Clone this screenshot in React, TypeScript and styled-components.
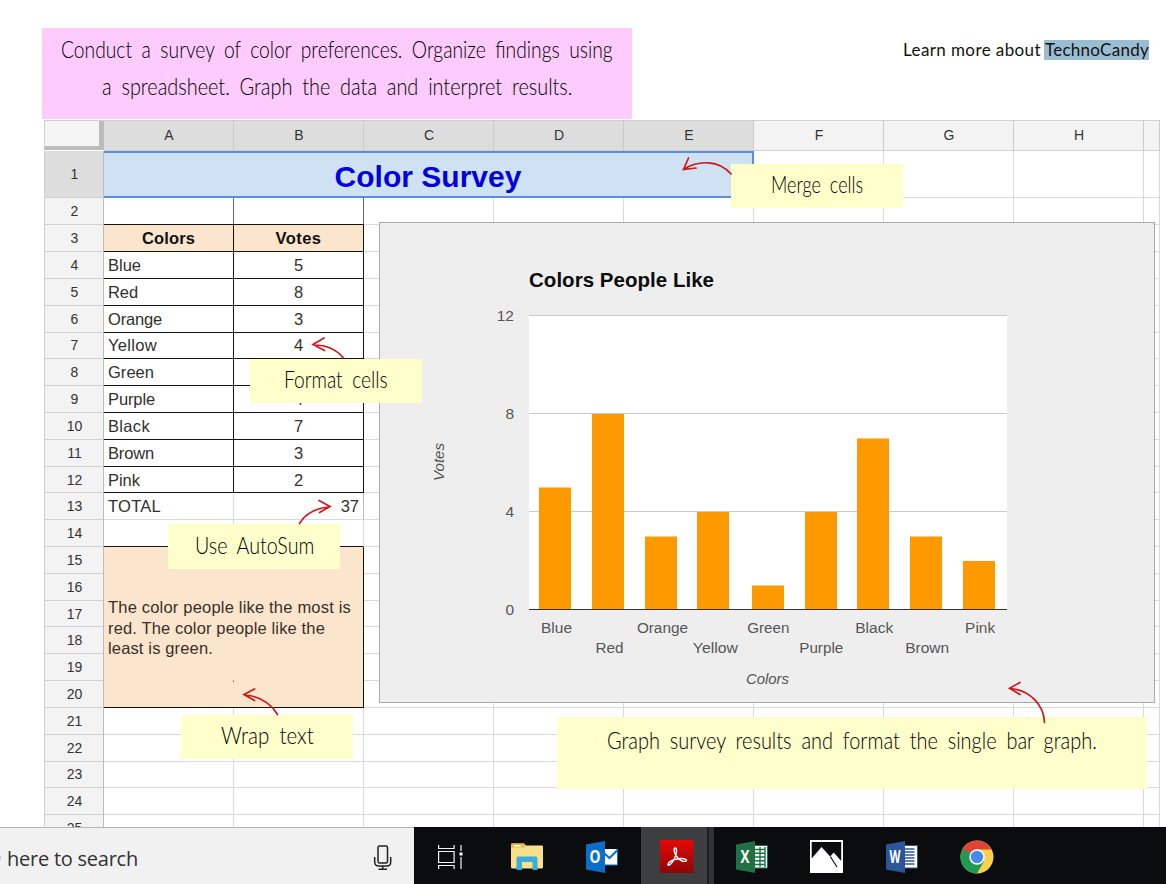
import React, { useLayoutEffect, useRef, useState } from "react";
import styled, { createGlobalStyle, css } from "styled-components";

const GlobalStyle = createGlobalStyle`
  * { box-sizing: border-box; }
  body { margin: 0; background: #fff; overflow: hidden; }
`;

const SANS = `"Liberation Sans", Arial, sans-serif`;

/* ---------- text that is tracked out to a given width ---------- */

const Tracked = styled.span`
  display: inline-block;
  white-space: nowrap;
`;

function Fit({ w, children }: { w: number; children: string }) {
  const ref = useRef<HTMLSpanElement>(null);
  const [spacing, setSpacing] = useState(0);
  useLayoutEffect(() => {
    if (ref.current) {
      setSpacing((w - ref.current.getBoundingClientRect().width) / children.length);
    }
  }, [w, children]);
  return (
    <Tracked ref={ref} style={{ letterSpacing: spacing }}>
      {children}
    </Tracked>
  );
}

/* ---------- handwritten line, condensed to a given width ---------- */

const InkLine = styled.span<{ $w: number }>`
  display: inline-block;
  width: ${(p) => p.$w}px;
  text-align: left;
  white-space: nowrap;
`;

const InkStroke = styled.span`
  display: inline-block;
  transform-origin: 0 50%;
`;

function Ink({ w, children }: { w: number; children: string }) {
  const ref = useRef<HTMLSpanElement>(null);
  const [scale, setScale] = useState(1);
  useLayoutEffect(() => {
    if (ref.current) setScale(w / ref.current.offsetWidth);
  }, [w, children]);
  return (
    <InkLine $w={w}>
      <InkStroke ref={ref} style={{ transform: `scaleX(${scale})` }}>
        {children}
      </InkStroke>
    </InkLine>
  );
}

/* ---------- page ---------- */

const Page = styled.div`
  position: relative;
  display: flex;
  flex-direction: column;
  width: 1166px;
  height: 884px;
  overflow: hidden;
  background: #fff;
  font-family: ${SANS};
`;

const Intro = styled.header`
  display: flex;
  justify-content: space-between;
  align-items: flex-start;
  flex: none;
  height: 120px;
  padding: 28px 17px 0 42px;
`;

const handwriting = css`
  font-family: "Lato", sans-serif;
  font-weight: 300;
  font-size: 22.5px;
  word-spacing: 5px;
  color: #000;
`;

const Assignment = styled.div`
  ${handwriting}
  display: flex;
  flex-direction: column;
  align-items: center;
  width: 590px;
  height: 91px;
  padding: 3px 0 0;
  line-height: 37px;
  background: #fdcbfd;
`;

const LearnMore = styled.div`
  display: flex;
  margin-top: 12px;
  font-family: "Lato", sans-serif;
  font-size: 17px;
  line-height: 19px;
  color: #111;
`;

const Highlighted = styled.span`
  height: 20px;
  margin-left: 3px;
  padding-left: 1px;
  background: #9bbdd3;
`;

/* ---------- spreadsheet ---------- */

const SheetFrame = styled.main`
  flex: 1;
  min-height: 0;
  overflow: hidden;
  padding-left: 44px;
`;

const Grid = styled.div`
  display: grid;
  width: 1116px;
  grid-template-columns: 60px repeat(8, 130px) 16px;
  grid-template-rows: 30px 47.3px 27px repeat(23, 26.82px);
  border-top: 1px solid #cfcfcf;
`;

const Corner = styled.div`
  grid-area: 1 / 1;
  margin-bottom: 1px;
  background: #f5f5f5;
  border-left: 1px solid #d0d0d0;
  border-right: 5px solid #bcbcbc;
  border-bottom: 4px solid #bcbcbc;
`;

const Head = styled.div<{ $on?: boolean; $side?: boolean }>`
  display: flex;
  align-items: center;
  justify-content: center;
  padding-bottom: ${(p) => (p.$side ? 0 : 1)}px;
  padding-left: 1px;
  font-size: 14px;
  color: #333;
  background: ${(p) => (p.$on ? "#dddddd" : "#f3f3f3")};
  border-right: 1px solid ${(p) => (p.$side ? "#bdbdbd" : "#cacaca")};
  border-bottom: 1px solid #cfcfcf;
  ${(p) => p.$side && "border-left: 1px solid #d0d0d0;"}
`;

type CellProps = {
  $right?: string;
  $bottom?: string;
  $fill?: string;
  $align?: string;
  $bold?: boolean;
};

const Cell = styled.div<CellProps>`
  display: flex;
  align-items: center;
  justify-content: ${(p) => p.$align ?? "flex-start"};
  min-width: 0;
  padding: 1px 4px 0 4px;
  font-size: 16.5px;
  font-weight: ${(p) => (p.$bold ? 700 : 400)};
  color: ${(p) => (p.$bold ? "#111" : "#303030")};
  background: ${(p) => p.$fill ?? "#fff"};
  border-right: 1px solid ${(p) => p.$right ?? "#dadada"};
  border-bottom: 1px solid ${(p) => p.$bottom ?? "#dadada"};
`;

const TitleCell = styled.div`
  grid-area: 2 / 2 / 3 / 7;
  display: flex;
  align-items: center;
  justify-content: center;
  padding-top: 4px;
  font-size: 30px;
  font-weight: 700;
  color: #0202dc;
  background: #cfe2f3;
  border: 2px solid #5c8edc;
  border-left: 0;
`;

const AnswerCell = styled.div`
  grid-area: 16 / 2 / 22 / 4;
  display: flex;
  flex-direction: column;
  align-items: flex-start;
  justify-content: center;
  padding-left: 4px;
  padding-top: 2px;
  font-size: 16.5px;
  line-height: 20.7px;
  color: #38302a;
  background: #fce5cd;
  border-right: 1px solid #111;
  border-bottom: 1px solid #111;
`;

/* ---------- floating layer ---------- */

const ChartCard = styled.section`
  position: absolute;
  left: 379px;
  top: 222px;
  width: 776px;
  height: 481px;
  background: #eeeeee;
  border: 1px solid #a9a9a9;
`;

const Sticky = styled.div<{ $x: number; $y: number; $w: number; $h: number; $pad?: number }>`
  ${handwriting}
  position: absolute;
  left: ${(p) => p.$x}px;
  top: ${(p) => p.$y}px;
  width: ${(p) => p.$w}px;
  height: ${(p) => p.$h}px;
  padding-top: ${(p) => p.$pad ?? 8}px;
  line-height: 26px;
  text-align: center;
  background: #ffffcc;
`;

const Arrows = styled.svg`
  position: absolute;
  inset: 0;
  pointer-events: none;
`;

/* ---------- taskbar ---------- */

const Taskbar = styled.footer`
  position: relative;
  display: flex;
  flex: none;
  height: 57px;
  background: #0b0c0e;
`;

const Search = styled.div`
  display: flex;
  align-items: center;
  justify-content: space-between;
  width: 414px;
  padding: 4px 22px 0 0;
  font-family: "Open Sans", "Noto Sans", sans-serif;
  font-size: 20px;
  color: #333;
  background: #f1f1f1;
  border-top: 1px solid #b4b4b4;
`;

const Query = styled.div`
  display: flex;
  align-items: center;
  gap: 6px;
  &::before {
    content: "";
    width: 1px;
    height: 4px;
    background: #b9cfe2;
  }
`;

const Apps = styled.nav`
  display: flex;
`;

const AppButton = styled.div<{ $active?: boolean }>`
  display: flex;
  align-items: center;
  justify-content: center;
  width: 75px;
  padding-top: 2px;
  ${(p) =>
    p.$active &&
    css`
      width: 73px;
      margin: 0 0 0 2px;
      padding-right: 2px;
      background: linear-gradient(90deg, #3d3e40 66px, #1d1e20 66px 68px, #303234 68px);
    `}
`;

/* ---------- data ---------- */

const votes: [string, number, number][] = [
  ["Blue", 5, 33], ["Red", 8, 30], ["Orange", 3, 54], ["Yellow", 4, 49],
  ["Green", 1, 46], ["Purple", 4, 47], ["Black", 7, 42], ["Brown", 3, 46], ["Pink", 2, 32],
];
const letters = ["A", "B", "C", "D", "E", "F", "G", "H", ""];
const rows = Array.from({ length: 25 }, (_, i) => i + 1);

const INK = "#141414";

function SheetCell({ row, col }: { row: number; col: number }) {
  const place = { gridRow: row + 1, gridColumn: col + 2 };
  const inTable = col < 2;
  if (inTable && row === 2) return <Cell style={place} $right="#666" $bottom={INK} />;
  if (inTable && row === 3)
    return (
      <Cell style={place} $right={INK} $bottom={INK} $fill="#fce5cd" $align="center" $bold>
        <Fit w={col ? 46 : 53}>{col ? "Votes" : "Colors"}</Fit>
      </Cell>
    );
  if (inTable && row >= 4 && row <= 12) {
    const [name, n, w] = votes[row - 4];
    return (
      <Cell style={place} $right={INK} $bottom={INK} $align={col ? "center" : undefined}>
        {col ? n : <Fit w={w}>{name}</Fit>}
      </Cell>
    );
  }
  if (inTable && row === 13)
    return (
      <Cell style={place} $align={col ? "flex-end" : undefined} $right={col ? "#bbb" : undefined}>
        {col ? "37" : <Fit w={53}>TOTAL</Fit>}
      </Cell>
    );
  if (inTable && row === 14) return <Cell style={place} $bottom={INK} />;
  return <Cell style={place} />;
}

function Chart() {
  const x0 = 149, base = 386, unit = 24.5;
  const barX = [159, 212, 265, 317, 372, 425, 477, 530, 583];
  const labelW = [31, 28, 51, 45, 42, 44, 38, 44, 30];
  return (
    <ChartCard>
      <svg width="774" height="479" fontFamily="Liberation Sans, Arial, sans-serif" fontSize="15.5" fill="#555">
        <text x={x0} y="64" fontSize="20.5" fontWeight="700" fill="#0c0c0c" textLength="185">Colors People Like</text>
        <rect x={x0} y="92" width="478" height="294" fill="#fff" />
        {[12, 8, 4].map((v) => (
          <rect key={v} x={x0} y={base - v * unit} width="478" height="1" fill="#c9c9c9" />
        ))}
        {[12, 8, 4, 0].map((v) => (
          <text key={v} x="134" y={base - v * unit + 6} textAnchor="end">{v}</text>
        ))}
        {votes.map(([name, n], i) => (
          <rect key={name} x={barX[i]} y={base - n * unit + 1} width="32" height={n * unit - 1} fill="#ff9900" />
        ))}
        <rect x={x0} y={base} width="478" height="1" fill="#333" />
        {votes.map(([name], i) => (
          <text
            key={name} x={176.5 + i * 52.95 - labelW[i] / 2} y={i % 2 ? 430 : 410}
            textLength={labelW[i]} lengthAdjust="spacingAndGlyphs"
          >
            {name}
          </text>
        ))}
        <text x="366" y="461" fontStyle="italic" textLength="43" lengthAdjust="spacingAndGlyphs">Colors</text>
        <text transform="translate(64 258) rotate(-90)" fontStyle="italic" textLength="38" lengthAdjust="spacingAndGlyphs">Votes</text>
      </svg>
    </ChartCard>
  );
}

const OfficeIcon = ({ kind }: { kind: "outlook" | "excel" | "word" }) => {
  const color = { outlook: "#0a6fc8", excel: "#1f7145", word: "#2a569a" }[kind];
  const letter = { outlook: "O", excel: "X", word: "W" }[kind];
  return (
    <svg width="32" height="32" viewBox="0 0 32 32">
      {kind === "outlook" && (
        <g>
          <path d="M18 8h14v16H18z" fill="#fff" />
          <path d="M18 12l5.500 5L32 8.500" fill="none" stroke={color} strokeWidth="2" />
          <path d="M31.500 8v16H18" fill="none" stroke={color} strokeWidth="1" />
        </g>
      )}
      {kind === "excel" && (
        <g>
          <path d="M18 4.500h13.500v22.500H18z" fill="#fff" stroke={color} strokeWidth="1" />
          <path d="M19 8.500h10M19 12.300h10M19 16h10M19 19.700h10M19 23.500h10M24 6v20M29 6v20" stroke={color} strokeWidth="1.400" />
        </g>
      )}
      {kind === "word" && (
        <g>
          <path d="M18 4.500h13.500v22.500H18z" fill="#fff" stroke={color} strokeWidth="1" />
          <path d="M19 8h9.500M19 11h9.500M19 14h9.500M19 17h9.500M19 20h9.500M19 23h9.500" stroke={color} strokeWidth="1.500" />
        </g>
      )}
      <path d="M0 3.500L19 0v32L0 28.500z" fill={color} />
      <text
        x="9" y="22" textAnchor="middle" fill="#fff" fontWeight="700"
        fontFamily="Open Sans, sans-serif" fontSize="17"
        textLength={kind === "excel" ? 9 : 11} lengthAdjust="spacingAndGlyphs"
      >
        {letter}
      </text>
    </svg>
  );
};

export default function App() {
  return (
    <Page>
      <GlobalStyle />
      <Intro>
        <Assignment>
          <Ink w={552}>Conduct a survey of color preferences. Organize findings using</Ink>
          <Ink w={470}>a spreadsheet. Graph the data and interpret results.</Ink>
        </Assignment>
        <LearnMore>
          <Fit w={138}>Learn more about</Fit>
          <Highlighted><Fit w={104}>TechnoCandy</Fit></Highlighted>
        </LearnMore>
      </Intro>

      <SheetFrame>
        <Grid>
          <Corner />
          {letters.map((l, i) => (
            <Head key={i} $on={i < 5}>{l}</Head>
          ))}
          {rows.map((r) => (
            <Head key={r} $side $on={r === 1} style={{ gridRow: r + 1, gridColumn: 1 }}>{r}</Head>
          ))}
          <TitleCell><Fit w={187}>Color Survey</Fit></TitleCell>
          <AnswerCell>
            <Fit w={243}>The color people like the most is</Fit>
            <Fit w={217}>red. The color people like the</Fit>
            <Fit w={105}>least is green.</Fit>
          </AnswerCell>
          {rows.flatMap((r) =>
            letters.map((_, c) => {
              const merged = (r === 1 && c < 5) || (r >= 15 && r <= 20 && c < 2);
              return merged ? null : <SheetCell key={`${r}-${c}`} row={r} col={c} />;
            })
          )}
        </Grid>
      </SheetFrame>

      <Chart />

      <Sticky $x={731} $y={164} $w={172} $h={44}><Ink w={92}>Merge cells</Ink></Sticky>
      <Sticky $x={250} $y={359} $w={172} $h={44}><Ink w={104}>Format cells</Ink></Sticky>
      <Sticky $x={168} $y={524} $w={172} $h={45} $pad={9}><Ink w={119}>Use AutoSum</Ink></Sticky>
      <Sticky $x={181} $y={715} $w={172} $h={44}><Ink w={93}>Wrap text</Ink></Sticky>
      <Sticky $x={557} $y={717} $w={590} $h={72} $pad={11}>
        <Ink w={490}>Graph survey results and format the single bar graph.</Ink>
      </Sticky>

      <Arrows width="1166" height="827" fill="none" stroke="#d0181c" strokeWidth="1.7" strokeLinecap="round">
        <path d="M731 174C719 160 699 160 684 169M688.500 158L683.500 169.500L696 168" />
        <path d="M343.500 358C336 349 326 345 313.500 345M324 338L313 344.500L324.500 350.500" />
        <path d="M299.500 523.500C306 513 316 508 329 507M319 500.500L330 506.500L319.500 512.500" />
        <path d="M277.500 714.500C270 702 259 696 244.500 695M254.500 689L244 694.500L254.500 700.500" />
        <path d="M1044.500 722.500C1044 706 1031 690 1010 688.500M1020 682.500L1009.500 688.300L1020 694.500" />
        <path d="M233.500 681v.1" stroke="#222" strokeWidth="1.2" />
      </Arrows>

      <Taskbar>
        <Search>
          <Query><Fit w={131}>here to search</Fit></Query>
          <svg width="19" height="26" viewBox="0 0 19 26" fill="none" stroke="#222" strokeWidth="1.500">
            <rect x="5" y="1" width="9.500" height="17" rx="1.500" />
            <path d="M1.700 12v5q0 4 4 4h8q4 0 4-4v-5M9.700 21v3.300M5.500 24.300h8.500" />
          </svg>
        </Search>
        <Apps>
          <AppButton>
            <svg width="28" height="24" viewBox="0 0 28 24" fill="none" stroke="#f4f4f4" strokeWidth="1.200">
              <path d="M.6 0v3.500h15.500V0M.6 24v-3.500h15.500V24M.6 6.500h15.500v11H.6zM23 0v6M23 12v12" />
              <path d="M21.500 7.500h3v3h-3z" fill="#fff" stroke="none" />
            </svg>
          </AppButton>
          <AppButton>
            <svg width="32" height="27" viewBox="0 0 32 27">
              <path d="M0 1.500Q0 .5 1 .5h12l2 2h16q1 0 1 1V24q0 1.500-1.500 1.500h-29Q0 25.500 0 24z" fill="#fbe08c" />
              <path d="M0 1.500Q0 .5 1 .5h12l1.500 2-1.500 2H1Q0 4.500 0 3.500z" fill="#e9bd3c" />
              <path d="M3 2h7v1.500H3z" fill="#fff" />
              <path d="M5.500 27V15q0-1.500 1.500-1.500h18q1.500 0 1.500 1.500v12h-5v-8h-10.500v8z" fill="#3aaedb" />
            </svg>
          </AppButton>
          <AppButton><OfficeIcon kind="outlook" /></AppButton>
          <AppButton $active>
            <svg width="34" height="34" viewBox="0 0 34 34">
              <defs>
                <linearGradient id="acro" x1="0" y1="0" x2="0" y2="1">
                  <stop offset="0" stopColor="#e60808" />
                  <stop offset="1" stopColor="#8e0507" />
                </linearGradient>
              </defs>
              <rect width="33.500" height="33" fill="url(#acro)" />
              <path
                d="M15.500 8C13.300 7.500 13.800 12 16.200 16C18.500 19.500 23 22.300 26 21.100C28 19.500 24 18 19 18.800C13 19.600 8.500 22 7.800 24.400C7.800 26.600 11.500 24.300 14 19.500C16.200 15.200 17.600 9 15.500 8Z"
                fill="none" stroke="#fff" strokeWidth="1.400"
              />
            </svg>
          </AppButton>
          <AppButton><OfficeIcon kind="excel" /></AppButton>
          <AppButton>
            <svg width="33" height="33" viewBox="0 0 33 33">
              <rect width="33" height="33" fill="#fff" />
              <path d="M1.700 2h29.500v19l-7.500-8.500-3.500 4L11.500 7 1.700 18.500z" fill="#0b0c0e" />
              <path d="M20.300 16.500L27 27" stroke="#0b0c0e" strokeWidth="1.200" />
            </svg>
          </AppButton>
          <AppButton><OfficeIcon kind="word" /></AppButton>
          <AppButton>
            <svg width="34" height="34" viewBox="0 0 34 34">
              <circle cx="17" cy="17" r="16.500" fill="#fbd04b" />
              <path d="M17 17L2.700 8.750A16.500 16.500 0 0 0 17 33.500L24.100 21z" fill="#219a55" />
              <path d="M2.700 8.750A16.500 16.500 0 0 1 31.500 9.500H17L9.800 21z" fill="#dc4437" />
              <path d="M2.700 8.750L9.900 21 15 26 17 17z" fill="#219a55" />
              <circle cx="17" cy="17" r="7.700" fill="#fff" />
              <circle cx="17" cy="17" r="6.200" fill="#4688f1" />
            </svg>
          </AppButton>
        </Apps>
      </Taskbar>
    </Page>
  );
}
